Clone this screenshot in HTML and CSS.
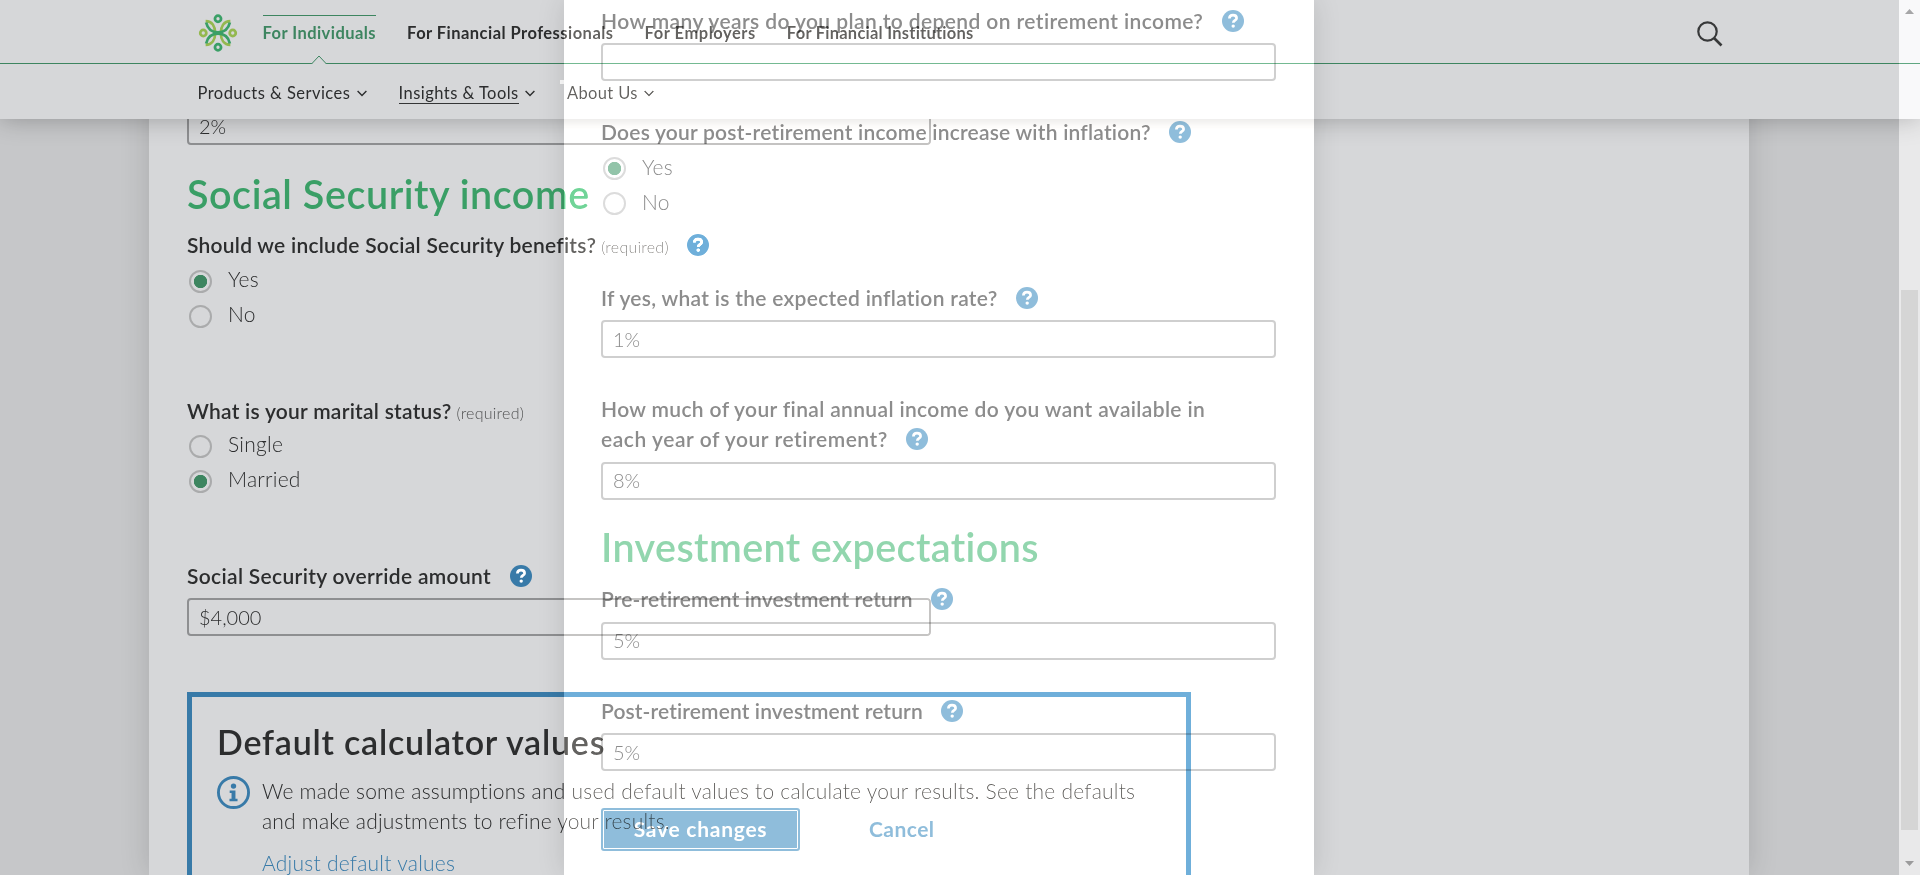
FILE: index.html
```html
<!DOCTYPE html>
<html lang="en">
<head>
<meta charset="utf-8">
<title>Retirement calculator</title>
<link rel="stylesheet" href="styles.css">
</head>
<body>
<svg width="0" height="0" class="defs">
  <symbol id="help" viewBox="0 0 22 22"><circle cx="11" cy="11" r="11" fill="currentColor"/><path d="M7.4 8.6C7.4 6.2 9 5.2 11 5.2s3.6 1.1 3.6 3c0 2.3-3.3 2.2-3.3 4.5" fill="none" stroke="#fff" stroke-width="2.7"/><circle cx="11.2" cy="16.1" r="1.7" fill="#fff"/></symbol>
  <symbol id="chev" viewBox="0 0 10 7"><path d="M.6 1l4.400 4.600L9.400 1" fill="none" stroke="currentColor" stroke-width="1.400"/></symbol>
</svg>
<div class="page">
  <main class="card">
    <div class="input w-main first">2%</div>
    <h2 class="t-ss">Social Security income</h2>
    <div class="label"><span class="t-should">Should we include Social Security benefits?</span><small>(required)</small><svg class="help"><use href="#help"/></svg></div>
    <div class="radios">
      <div class="radio"><i class="dot on"></i>Yes</div>
      <div class="radio"><i class="dot"></i>No</div>
    </div>
    <div class="label after-radios"><span class="t-marital">What is your marital status?</span><small>(required)</small></div>
    <div class="radios tight">
      <div class="radio"><i class="dot"></i>Single</div>
      <div class="radio"><i class="dot on"></i>Married</div>
    </div>
    <div class="label after-radios"><span class="t-over">Social Security override amount</span><svg class="help"><use href="#help"/></svg></div>
    <div class="input w-main">$4,000</div>
    <section class="defaults">
      <h3>Default calculator values</h3>
      <div class="info">
        <svg class="info-icon" viewBox="0 0 32 32"><circle cx="16" cy="16" r="14.600" fill="none" stroke="currentColor" stroke-width="2.800"/><circle cx="16" cy="9.800" r="2.600" fill="currentColor"/><path d="M12.300 14h5.600v8h2v2.400h-7.800V22h2v-5.600h-1.800z" fill="currentColor"/></svg>
        <div>
          <p><span class="t-we">We made some assumptions and used default values to calculate your results. See the defaults</span><br><span class="t-and">and make adjustments to refine your results.</span></p>
          <a class="t-adjust">Adjust default values</a>
        </div>
      </div>
    </section>
  </main>
  <header class="header">
    <div class="top">
      <svg class="logo" viewBox="0 0 40 40" fill="none">
        <g stroke="#94b84f" stroke-width="2.900"><circle cx="4.500" cy="20" r="3.200"/><circle cx="35.500" cy="20" r="3.200"/>
        <path d="M7 7.500c7 0 10 6 10 12.500s-3 12.500-10 12.500M33 7.500c-7 0-10 6-10 12.500s3 12.500 10 12.500"/></g>
        <g stroke="#3a9f66" stroke-width="2.900"><circle cx="20" cy="5" r="3.200"/><circle cx="20" cy="35" r="3.200"/>
        <path d="M7.500 9c1.500 6.500 5 10.300 12.500 10.300S31 15.500 32.500 9M7.500 31c1.500-6.500 5-10.300 12.500-10.300S31 24.500 32.500 31"/></g>
      </svg>
      <nav class="nav">
        <a class="active t-ind">For Individuals</a><a class="t-pro">For Financial Professionals</a><a class="t-emp">For Employers</a><a class="t-inst">For Financial Institutions</a>
      </nav>
      <svg class="search" viewBox="0 0 26 26" fill="none" stroke="#38393a"><circle cx="10.500" cy="10.500" r="9.200" stroke-width="2.200"/><path d="M17 17l7.500 7.500" stroke-width="2.600"/></svg>
    </div>
    <svg class="caret" viewBox="0 0 16 9"><path d="M.5 9L8 1l7.500 8" fill="#d6d7d9" stroke="#3d8560"/></svg>
    <nav class="sub">
      <a><span class="t-prod">Products &amp; Services</span><svg><use href="#chev"/></svg></a>
      <a><span class="current t-ins">Insights &amp; Tools</span><svg><use href="#chev"/></svg></a>
      <a><span class="t-about">About Us</span><svg><use href="#chev"/></svg></a>
    </nav>
  </header>
</div>
<div class="glow"></div>
<div class="glow-bar"></div>
<div class="tick"></div>
<aside class="modal">
  <div class="label"><span class="m-1">How many years do you plan to depend on retirement income?</span><svg class="help"><use href="#help"/></svg></div>
  <div class="input"></div>
  <div class="label next"><span class="m-2">Does your post-retirement income increase with inflation?</span><svg class="help"><use href="#help"/></svg></div>
  <div class="radios">
    <div class="radio"><i class="dot on"></i>Yes</div>
    <div class="radio"><i class="dot"></i>No</div>
  </div>
  <div class="label after-radios"><span class="m-3">If yes, what is the expected inflation rate?</span><svg class="help"><use href="#help"/></svg></div>
  <div class="input">1%</div>
  <div class="label next two"><span class="m-4">How much of your final annual income do you want available in</span><br><span class="m-5">each year of your retirement?</span><svg class="help"><use href="#help"/></svg></div>
  <div class="input low">8%</div>
  <h2 class="t-inv">Investment expectations</h2>
  <div class="label"><span class="m-6">Pre-retirement investment return</span><svg class="help"><use href="#help"/></svg></div>
  <div class="input low">5%</div>
  <div class="label next"><span class="m-7">Post-retirement investment return</span><svg class="help"><use href="#help"/></svg></div>
  <div class="input">5%</div>
  <div class="actions"><button class="save">Save changes</button><a class="cancel">Cancel</a></div>
</aside>
<div class="scrollbar">
  <svg viewBox="0 0 9 5"><path d="M0 5L4.500 0 9 5z"/></svg>
  <div class="thumb"></div>
  <svg viewBox="0 0 9 5"><path d="M0 0l4.500 5L9 0z"/></svg>
</div>
</body>
</html>
```
FILE: styles.css
```css
* { box-sizing: border-box; }
body {
  margin: 0;
  width: 1920px;
  height: 875px;
  overflow: hidden;
  position: relative;
  background: #c6c7c9;
  font-family: Lato, "Open Sans", sans-serif;
  font-size: 20px;
  line-height: 30px;
  color: #2c2d2e;
}
h2, h3, p { margin: 0; }
.defs { position: absolute; }
.page { height: 875px; overflow: hidden; background: #c6c7c9; }
.card {
  width: 1600px;
  height: 875px;
  margin-left: 149px;
  padding: 107px 38px 0;
  background: #d6d7d9;
  box-shadow: 0 0 28px rgba(0, 0, 0, .15);
}
h2 { margin-top: 22px; font-size: 39.5px; line-height: 50px; font-weight: 600; color: #3a9f66; white-space: nowrap; }
.label { display: flex; align-items: center; height: 30px; margin-top: 12px; font-size: 21px; font-weight: 600; white-space: nowrap; }
.label.after-radios { margin-top: 66px; }
.label.next { margin-top: 36px; }
.label.two { display: block; height: 60px; }
.label.two .help { vertical-align: -3px; }
.label small { margin-left: 5px; font-size: 16px; font-weight: 300; letter-spacing: .25px; padding-top: 3px; color: #505152; }
.help { width: 22px; height: 22px; flex: none; margin-left: 18.5px; color: #387aa8; }
.radios { display: grid; gap: 5px; margin-top: 4px; }
.radios.tight { margin-top: 3px; }
.radio { display: flex; align-items: center; height: 30px; font-size: 21px; font-weight: 300; letter-spacing: .25px; }
.dot { width: 23px; height: 23px; margin: 4px 16px 0 2px; border: 2px solid #aaabac; border-radius: 50%; }
.dot.on { background: radial-gradient(circle, #3d8560 0 6.300px, transparent 7px); }
.input {
  height: 38px;
  margin-top: 7px;
  padding: 2px 10px;
  border: 2px solid #8e8f91;
  border-radius: 4px;
  font-weight: 300;
}
.input.low { margin-top: 8px; }
.w-main { width: 744px; padding-top: 2px; }
.input.first { margin-top: 0; }
.card h2 { margin-top: 24px; }
.card .label { margin-top: 11px; }
.card .label.after-radios { margin-top: 67px; }
.defaults { width: 1004px; height: 230px; margin-top: 56px; padding: 25px 25px; border: 5px solid #387aa8; }
h3 { font-size: 34px; line-height: 40px; font-weight: 600; white-space: nowrap; }
.info { display: flex; gap: 12px; margin-top: 14px; font-size: 21px; font-weight: 300; white-space: nowrap; }
.info-icon { width: 33px; height: 33px; flex: none; color: #387aa8; }
.info a { display: inline-block; margin-top: 12px; color: #387aa8; font-weight: 300; }

.header {
  position: absolute;
  inset: 0 0 auto;
  height: 119px;
  background: #d6d7d9;
  box-shadow: 0 0 24px rgba(0, 0, 0, .28);
}
.top { display: flex; align-items: center; height: 64px; padding: 0 197px 0 198px; border-bottom: 1px solid #3d8560; }
.logo { width: 40px; height: 38px; margin-top: 2px; }
.nav { display: flex; gap: 31px; margin-left: 24.5px; font-size: 16.5px; font-weight: 700; line-height: 32px; white-space: nowrap; }
.nav a { padding-top: 1px; border-top: 1px solid transparent; }
.nav .active { color: #3d8560; border-color: #3d8560; }
.search { width: 26px; height: 26px; margin-left: auto; margin-top: 4px; }
.caret { position: absolute; left: 311px; top: 55px; width: 16px; height: 9px; }
.sub { display: flex; gap: 32px; height: 55px; padding: 12px 0 0 197.5px; font-size: 16.5px; line-height: 34px; }
.sub a { display: flex; align-items: center; gap: 6.3px; height: 34px; white-space: nowrap; }
.sub svg { width: 10px; height: 7px; }
.current { line-height: 20px; border-bottom: 1px solid #343536; margin-top: 1px; }

/* Tracking per line of text */
.t-ss { letter-spacing: .55px; }
.t-inv { letter-spacing: .4px; }
.t-should { letter-spacing: .25px; }
.t-marital { letter-spacing: .25px; }
.t-over { letter-spacing: .33px; }
.m-1 { letter-spacing: .4px; }
.m-2 { letter-spacing: .22px; }
.m-3 { letter-spacing: .3px; }
.m-4 { letter-spacing: .35px; }
.m-5 { letter-spacing: .55px; }
.m-6, .m-7 { letter-spacing: .12px; }
.t-ind { letter-spacing: .45px; }
.t-pro { letter-spacing: .46px; }
.t-emp { letter-spacing: .54px; }
.t-inst { letter-spacing: .24px; }
.t-prod, .t-ins { letter-spacing: .46px; }
.t-about { letter-spacing: .36px; }
h3 { letter-spacing: .78px; }
.t-we { letter-spacing: .22px; }
.t-and { letter-spacing: .2px; }
.t-adjust { letter-spacing: .25px; }

/* Lightens everything below the dialog, as an additive layer */
.glow, .glow-bar { position: absolute; top: 0; height: 875px; mix-blend-mode: plus-lighter; }
.glow { left: 564px; width: 750px; background: rgb(55, 53, 50); }
.glow-bar { left: 1899px; width: 21px; background: rgb(35, 34, 33); }
.tick { position: absolute; left: 560px; top: 80px; width: 4px; height: 4px; background: #fff; }

.modal {
  position: absolute;
  left: 564px;
  top: 0;
  width: 750px;
  height: 875px;
  padding: 6px 38px 0 37px;
  mix-blend-mode: multiply;
  background: #fff;
  color: #8c8c8c;
  box-shadow: 0 0 26px rgba(0, 0, 0, .13);
}
.modal .label:first-child { margin-top: 0; }
.modal .radios { margin-top: 4.5px; }
.modal .input { border-color: #cfcfcf; }
.modal .low { padding-top: 1px; }
.modal h2 { color: #92d6ae; }
.modal .help { color: #8fbddb; }
.modal .dot { border-color: #dcdcdc; }
.modal .dot.on { background: radial-gradient(circle, #92c4a9 0 6.300px, transparent 7px); }
.actions { display: flex; align-items: center; margin-top: 37px; }
.save {
  width: 199px;
  height: 43px;
  padding: 0;
  border: 2px solid #8fbddb;
  border-radius: 3px;
  background: #8fbddb;
  box-shadow: inset 0 0 0 1px #fff;
  color: #fff;
  font: 700 21px/38px Lato, sans-serif;
  letter-spacing: .75px;
}
.cancel { margin-left: 69px; color: #8fbddb; font-size: 21px; font-weight: 700; letter-spacing: .45px; }

.scrollbar {
  position: absolute;
  left: 1899px;
  top: 0;
  width: 21px;
  height: 875px;
  padding: 9px 2px 9px;
  display: flex;
  flex-direction: column;
  align-items: center;
  mix-blend-mode: multiply;
}
.scrollbar svg { width: 9px; height: 5px; fill: #aaa; }
.thumb { width: 17px; height: 540px; margin: 276px 0 auto; background: #e9e9e9; }
```
